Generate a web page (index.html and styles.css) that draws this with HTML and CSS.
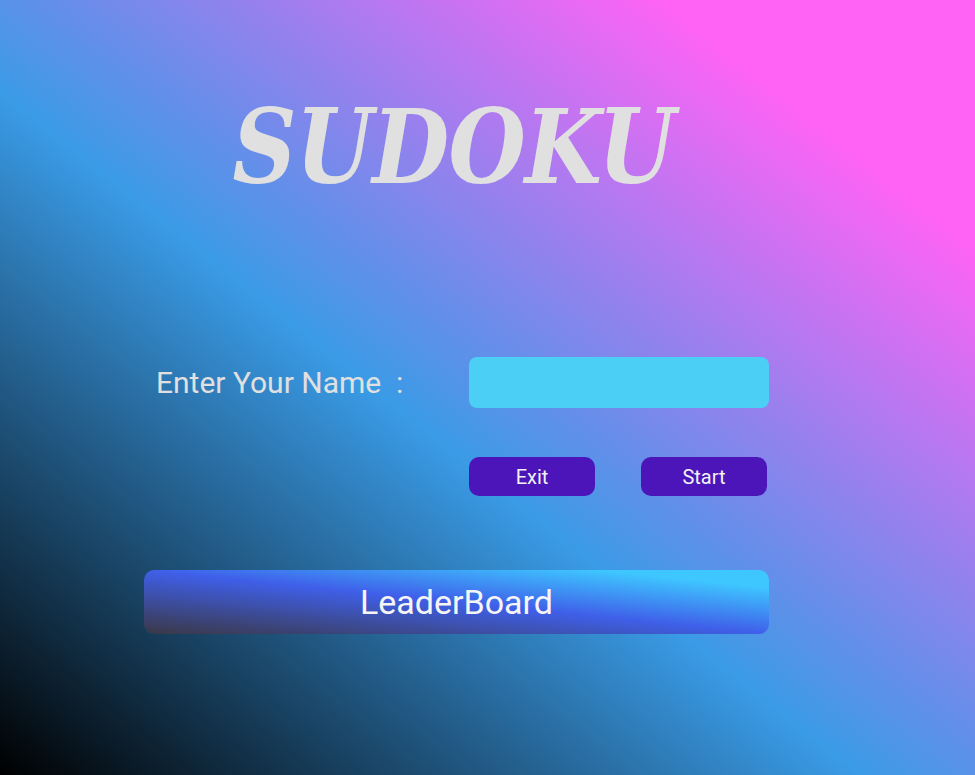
FILE: index.html
```html
<!DOCTYPE html>
<html lang="en">
<head>
<meta charset="utf-8">
<title>Sudoku</title>
<link rel="stylesheet" href="styles.css">
</head>
<body>
<main class="screen">
  <div class="column">
    <h1 class="title">SUDOKU</h1>
    <div class="name-row">
      <label class="name-label" for="player">Enter Your Name&nbsp;&nbsp;:</label>
      <input class="name-input" id="player" type="text">
    </div>
    <div class="actions">
      <button class="btn-small" type="button">Exit</button>
      <button class="btn-small" type="button">Start</button>
    </div>
    <button class="btn-leader" type="button">LeaderBoard</button>
  </div>
</main>
</body>
</html>
```

FILE: styles.css
```css
html, body {
  margin: 0;
  padding: 0;
}

body {
  width: 975px;
  height: 775px;
  overflow: hidden;
  font-family: Roboto, "Noto Sans", sans-serif;
}

.screen {
  box-sizing: border-box;
  width: 975px;
  height: 775px;
  padding-left: 144px;
  background: linear-gradient(to top right, #000000 0%, #3a9be6 44%, #ff63f6 84%, #ff63f6 100%);
}

.column {
  width: 625px;
  display: flex;
  flex-direction: column;
}

.title {
  margin: 96px 0 0 -6px;
  font-family: "DejaVu Serif", serif;
  font-weight: bold;
  font-style: italic;
  font-size: 102px;
  line-height: 102px;
  color: #e0e0e0;
  text-align: center;
  letter-spacing: -1px;
  transform: scaleX(0.87);
  transform-origin: 50% 50%;
}

.name-row {
  margin-top: 159px;
  display: flex;
  align-items: center;
  height: 51px;
}

.name-label {
  box-sizing: border-box;
  width: 325px;
  padding-left: 12px;
  font-size: 30px;
  line-height: 36px;
  color: #e0e0e0;
  white-space: nowrap;
}

.name-input {
  box-sizing: border-box;
  width: 300px;
  height: 51px;
  border: none;
  border-radius: 8px;
  background: #4bcff5;
  outline: none;
  padding: 0 12px;
  font-family: Roboto, sans-serif;
  font-size: 20px;
}

.actions {
  margin-top: 49px;
  margin-left: 325px;
  display: flex;
  gap: 46px;
}

.btn-small {
  width: 126px;
  height: 39px;
  border: none;
  border-radius: 10px;
  background: #4b15b9;
  color: #f2f2f2;
  font-family: Roboto, sans-serif;
  font-size: 20px;
  padding: 0;
}

.btn-leader {
  margin-top: 74px;
  width: 625px;
  height: 64px;
  border: none;
  border-radius: 10px;
  padding: 0;
  background: linear-gradient(to top right, #3a3846 0%, #3f5fe9 50%, #3ec6ff 86%, #3ec6ff 100%);
  color: #f5f5f5;
  font-family: Roboto, sans-serif;
  font-size: 34px;
}
```
